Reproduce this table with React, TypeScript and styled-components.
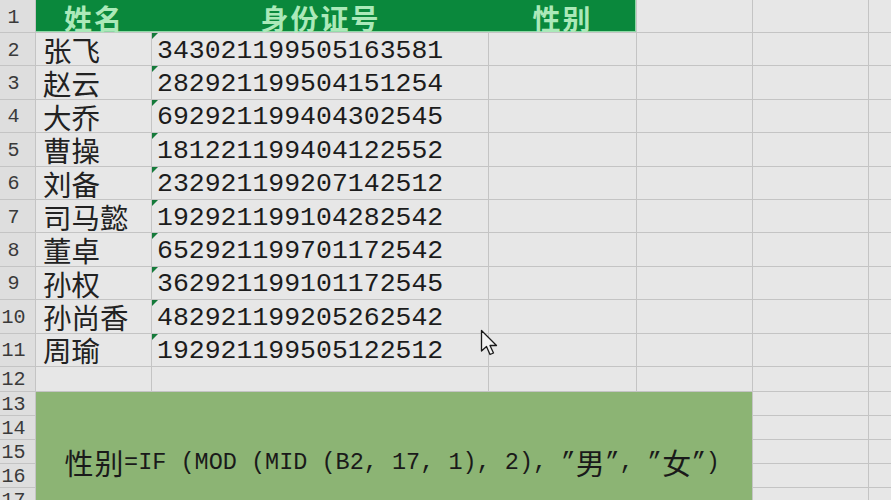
import React from "react";
import styled, { createGlobalStyle } from "styled-components";

const Global = createGlobalStyle`
  html, body { margin: 0; padding: 0; background: #e7e7e7; overflow: hidden; }
  #root { width: 891px; height: 500px; overflow: hidden; position: relative; }
`;

const Sheet = styled.div`
  display: grid;
  grid-template-columns: 35px 115px 336px 147px 115px 115px 1fr;
  grid-template-rows: 32px repeat(10, 32.4px) 24px repeat(6, 23px);
  gap: 1px;
  background: #c4c4c4;
  width: 891px;
  height: 540px;
  font-family: "Liberation Mono", "Noto Sans CJK SC", monospace;
`;

const RowHead = styled.div`
  background: #dedede;
  color: #3a3a3a;
  font-family: "Liberation Mono", monospace;
  font-size: 20px;
  display: flex;
  align-items: center;
  justify-content: center;
  padding-right: 8px;
  padding-top: 2px;
  box-sizing: border-box;
`;

const Cell = styled.div`
  background: #e7e7e7;
  position: relative;
  display: flex;
  align-items: center;
  min-width: 0;
`;

const NameCell = styled(Cell)`
  padding-left: 7px;
  padding-top: 2px;
  font-family: "Noto Sans CJK SC", sans-serif;
  font-size: 28.5px;
  color: #222222;
  line-height: 1;
`;

const IdCell = styled(Cell)`
  padding-left: 5px;
  font-family: "Liberation Mono", monospace;
  font-size: 26.5px;
  color: #1c1c1c;
  padding-top: 3px;
  &::before {
    content: "";
    position: absolute;
    left: 0;
    top: 0;
    width: 0;
    height: 0;
    border-top: 6px solid #157a3a;
    border-right: 6px solid transparent;
  }
`;

const HeaderBand = styled.div`
  grid-column: 2 / 5;
  background: #0a883c;
  display: grid;
  grid-template-columns: 116px 337px 1fr;
  box-shadow: inset -1px -1px 0 #8fd9a6;
`;

const HeaderLabel = styled.div`
  display: flex;
  align-items: center;
  justify-content: center;
  padding-top: 3px;
  font-family: "Noto Sans CJK SC", sans-serif;
  font-weight: 700;
  font-size: 28px;
  letter-spacing: 2px;
  color: #abe9b9;
  line-height: 1;
`;

const FormulaBlock = styled.div`
  grid-column: 2 / 6;
  grid-row: 13 / 19;
  background: #8cb474;
  display: flex;
  align-items: center;
  justify-content: center;
  font-family: "Liberation Mono", monospace;
  font-size: 23.5px;
  color: #1a1a1a;
  white-space: pre;
  padding-bottom: 2px;
  padding-right: 4px;
`;

const Han = styled.span`
  font-family: "Noto Sans CJK SC", sans-serif;
  font-size: 29px;
  display: inline-block;
  width: 30px;
  text-align: center;
  line-height: 1;
`;

const Cursor = styled.svg`
  position: absolute;
  left: 480px;
  top: 329px;
`;

const people: [string, string][] = [
  ["张飞", "343021199505163581"],
  ["赵云", "282921199504151254"],
  ["大乔", "692921199404302545"],
  ["曹操", "181221199404122552"],
  ["刘备", "232921199207142512"],
  ["司马懿", "192921199104282542"],
  ["董卓", "652921199701172542"],
  ["孙权", "362921199101172545"],
  ["孙尚香", "482921199205262542"],
  ["周瑜", "192921199505122512"],
];

export default function App() {
  return (
    <>
      <Global />
      <Sheet>
        <RowHead>1</RowHead>
        <HeaderBand>
          <HeaderLabel>姓名</HeaderLabel>
          <HeaderLabel>身份证号</HeaderLabel>
          <HeaderLabel>性别</HeaderLabel>
        </HeaderBand>
        <Cell />
        <Cell />
        <Cell />

        {people.map(([name, id], i) => (
          <React.Fragment key={id}>
            <RowHead>{i + 2}</RowHead>
            <NameCell>{name}</NameCell>
            <IdCell>{id}</IdCell>
            <Cell />
            <Cell />
            <Cell />
            <Cell />
          </React.Fragment>
        ))}

        <RowHead>12</RowHead>
        <Cell />
        <Cell />
        <Cell />
        <Cell />
        <Cell />
        <Cell />

        {[13, 14, 15, 16, 17, 18].map((n) => (
          <React.Fragment key={n}>
            <RowHead style={{ gridRow: n, gridColumn: 1 }}>{n}</RowHead>
            <Cell style={{ gridRow: n, gridColumn: 6 }} />
            <Cell style={{ gridRow: n, gridColumn: 7 }} />
          </React.Fragment>
        ))}
        <FormulaBlock>
          <Han>性</Han>
          <Han>别</Han>
          {"=IF (MOD (MID (B2, 17, 1), 2), ”"}
          <Han>男</Han>
          {"”, ”"}
          <Han>女</Han>
          {"”)"}
        </FormulaBlock>
      </Sheet>
      <Cursor width="22" height="30" viewBox="0 0 22 30">
        <path
          d="M1.5 1.5 L1.5 22 L6.5 17.5 L10 25.5 L13.5 24 L10 16.5 L16.5 16.5 Z"
          fill="#f2f2f2"
          stroke="#1a1a1a"
          strokeWidth="1.3"
          strokeLinejoin="round"
        />
      </Cursor>
    </>
  );
}
